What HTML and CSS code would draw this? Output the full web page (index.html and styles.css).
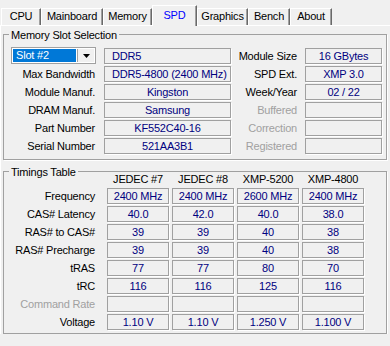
FILE: index.html
```html
<!DOCTYPE html>
<html lang="en">
<head>
    <meta charset="UTF-8">
    <meta name="viewport" content="width=device-width, initial-scale=1.0">
    <title>CPU-Z SPD</title>
    <link rel="stylesheet" href="styles.css">
</head>
<body>
    <div class="tabs">
        <div class="tab tab-cpu">CPU</div>
        <div class="tab tab-mainboard">Mainboard</div>
        <div class="tab tab-memory">Memory</div>
        <div class="tab tab-spd active">SPD</div>
        <div class="tab tab-graphics">Graphics</div>
        <div class="tab tab-bench">Bench</div>
        <div class="tab tab-about">About</div>
    </div>

    <div class="panel">
        <div class="group group-slot">
            <div class="group-title">Memory Slot Selection</div>
            <div class="slot-grid">
                <div class="combo">
                    <span class="combo-value">Slot #2</span>
                    <span class="combo-btn">
                        <svg width="7" height="4" viewBox="0 0 7 4"><polygon points="0,0 7,0 3.5,4" fill="#000"/></svg>
                    </span>
                </div>
                <div class="field left">DDR5</div>
                <div class="label">Module Size</div>
                <div class="field">16 GBytes</div>

                <div class="label">Max Bandwidth</div>
                <div class="field left">DDR5-4800 (2400 MHz)</div>
                <div class="label">SPD Ext.</div>
                <div class="field">XMP 3.0</div>

                <div class="label">Module Manuf.</div>
                <div class="field">Kingston</div>
                <div class="label">Week/Year</div>
                <div class="field">02 / 22</div>

                <div class="label">DRAM Manuf.</div>
                <div class="field">Samsung</div>
                <div class="label disabled">Buffered</div>
                <div class="field"></div>

                <div class="label">Part Number</div>
                <div class="field">KF552C40-16</div>
                <div class="label disabled">Correction</div>
                <div class="field"></div>

                <div class="label">Serial Number</div>
                <div class="field">521AA3B1</div>
                <div class="label disabled">Registered</div>
                <div class="field"></div>
            </div>
        </div>

        <div class="group group-timings">
            <div class="group-title">Timings Table</div>
            <div class="timing-grid">
                <div></div>
                <div class="col-head">JEDEC #7</div>
                <div class="col-head">JEDEC #8</div>
                <div class="col-head">XMP-5200</div>
                <div class="col-head">XMP-4800</div>

                <div class="label">Frequency</div>
                <div class="field">2400 MHz</div>
                <div class="field">2400 MHz</div>
                <div class="field">2600 MHz</div>
                <div class="field">2400 MHz</div>

                <div class="label">CAS# Latency</div>
                <div class="field">40.0</div>
                <div class="field">42.0</div>
                <div class="field">40.0</div>
                <div class="field">38.0</div>

                <div class="label">RAS# to CAS#</div>
                <div class="field">39</div>
                <div class="field">39</div>
                <div class="field">40</div>
                <div class="field">38</div>

                <div class="label">RAS# Precharge</div>
                <div class="field">39</div>
                <div class="field">39</div>
                <div class="field">40</div>
                <div class="field">38</div>

                <div class="label">tRAS</div>
                <div class="field">77</div>
                <div class="field">77</div>
                <div class="field">80</div>
                <div class="field">70</div>

                <div class="label">tRC</div>
                <div class="field">116</div>
                <div class="field">116</div>
                <div class="field">125</div>
                <div class="field">116</div>

                <div class="label disabled">Command Rate</div>
                <div class="field"></div>
                <div class="field"></div>
                <div class="field"></div>
                <div class="field"></div>

                <div class="label">Voltage</div>
                <div class="field">1.10 V</div>
                <div class="field">1.10 V</div>
                <div class="field">1.250 V</div>
                <div class="field">1.100 V</div>
            </div>
        </div>
    </div>
</body>
</html>
```

FILE: styles.css
```css
body {
    margin: 0;
    background-color: #f0f0f0;
    font-family: "Liberation Sans", Arial, sans-serif;
    font-size: 11px;
    letter-spacing: -0.2px;
    color: #000;
    overflow: hidden;
}

/* Tab strip */
.tabs {
    display: flex;
    align-items: flex-end;
    height: 25px;
    padding-left: 1px;
}
.tab {
    box-sizing: border-box;
    height: 17px;
    line-height: 15px;
    text-align: center;
    border-top: 1px solid #fff;
    border-left: 1px solid #fff;
    border-right: 1px solid #696969;
    box-shadow: inset -1px 0 0 #a0a0a0;
}
.tab.active {
    position: relative;
    z-index: 1;
    height: 21px;
    margin-bottom: -1px;
    padding-top: 2px;
    background-color: #f0f0f0;
    color: #0000ff;
}
.tab-cpu { width: 40px; }
.tab-mainboard { width: 62px; }
.tab-memory { width: 49px; }
.tab-spd { width: 45px; }
.tab-graphics { width: 51px; }
.tab-bench { width: 42px; }
.tab-about { width: 42px; }

.panel {
    border-top: 1px solid #fff;
    border-left: 1px solid #fff;
    padding-left: 2px;
}

/* Group boxes */
.group {
    box-sizing: border-box;
    width: 384px;
    border: 1px solid #a0a0a0;
    box-shadow: 1px 1px 0 #fff;
    padding-left: 7px;
}
.group-title {
    width: fit-content;
    line-height: 14px;
    margin-top: -7px;
    margin-left: -2px;
    padding: 0 2px;
    background-color: #f0f0f0;
}
.group-slot {
    margin-top: 8px;
    padding-bottom: 5px;
}
.group-slot .group-title {
    margin-bottom: 6px;
}
.group-timings {
    margin-top: 11px;
    padding-bottom: 3px;
}
.group-timings .group-title {
    margin-bottom: -6px;
}

.label {
    text-align: right;
    padding-right: 9px;
    line-height: 16px;
    white-space: nowrap;
}
.label.disabled {
    color: #a0a0a0;
}

.field {
    box-sizing: border-box;
    height: 16px;
    line-height: 14px;
    text-align: center;
    color: #000080;
    border: 1px solid #a0a0a0;
    box-shadow: 1px 1px 0 #fff;
    white-space: nowrap;
    overflow: hidden;
}
.field.left {
    text-align: left;
    padding-left: 7px;
}

/* Memory slot grid */
.slot-grid {
    display: grid;
    grid-template-columns: 93px 127px 74px 77px;
    grid-auto-rows: 16px;
    row-gap: 2px;
}
.slot-grid .label:nth-child(4n+3) {
    padding-right: 8px;
}

.combo {
    box-sizing: border-box;
    display: flex;
    width: 85px;
    height: 17px;
    margin-top: -1px;
    padding: 1px;
    border: 1px solid #a0a0a0;
    background-color: #fff;
}
.combo-value {
    flex: 1;
    background-color: #0078d7;
    color: #fff;
    line-height: 13px;
    padding-left: 3px;
}
.combo-btn {
    width: 16px;
    display: flex;
    align-items: center;
    justify-content: center;
    margin-left: 1px;
    background-color: #f0f0f0;
    border-left: 1px solid #a0a0a0;
}

/* Timings grid */
.timing-grid {
    display: grid;
    grid-template-columns: 93px 62px 62px 62px 62px;
    grid-template-rows: 13px;
    grid-auto-rows: 16px;
    column-gap: 3px;
    row-gap: 2px;
}
.timing-grid .label {
    padding-right: 9px;
}
.col-head {
    text-align: center;
    line-height: 13px;
}
```
